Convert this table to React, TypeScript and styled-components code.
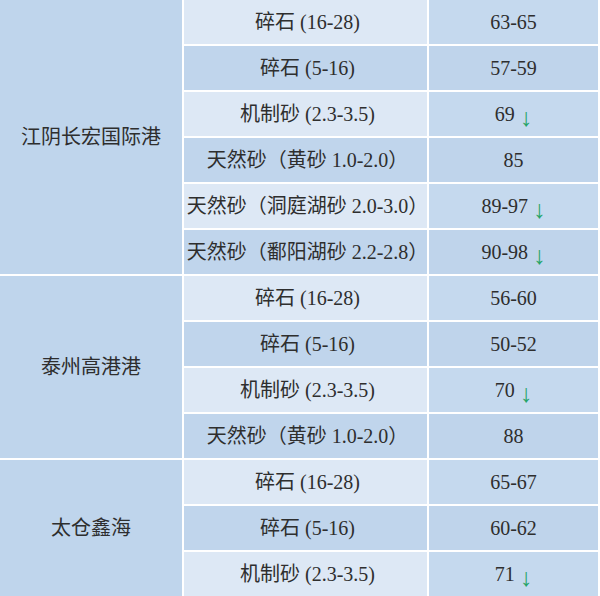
import React from 'react'
import styled, { createGlobalStyle } from 'styled-components'

type Item = { name: string; price: string; down?: boolean }
type Group = { port: string; items: Item[] }

const groups: Group[] = [
  {
    port: '江阴长宏国际港',
    items: [
      { name: '碎石 (16-28)', price: '63-65' },
      { name: '碎石 (5-16)', price: '57-59' },
      { name: '机制砂 (2.3-3.5)', price: '69', down: true },
      { name: '天然砂（黄砂 1.0-2.0）', price: '85' },
      { name: '天然砂（洞庭湖砂 2.0-3.0）', price: '89-97', down: true },
      { name: '天然砂（鄱阳湖砂 2.2-2.8）', price: '90-98', down: true },
    ],
  },
  {
    port: '泰州高港港',
    items: [
      { name: '碎石 (16-28)', price: '56-60' },
      { name: '碎石 (5-16)', price: '50-52' },
      { name: '机制砂 (2.3-3.5)', price: '70', down: true },
      { name: '天然砂（黄砂 1.0-2.0）', price: '88' },
    ],
  },
  {
    port: '太仓鑫海',
    items: [
      { name: '碎石 (16-28)', price: '65-67' },
      { name: '碎石 (5-16)', price: '60-62' },
      { name: '机制砂 (2.3-3.5)', price: '71', down: true },
    ],
  },
]

const GlobalStyle = createGlobalStyle`
  html, body {
    margin: 0;
    padding: 0;
    background: #ffffff;
  }
  body {
    font-family: 'Liberation Serif', 'Noto Sans CJK SC', serif;
    color: #2e2e2e;
  }
`

const Table = styled.div`
  display: grid;
  grid-template-columns: 182px 243px 1fr;
  grid-auto-rows: 44px;
  gap: 2px;
  width: 600px;
  height: 596px;
  padding-right: 2px;
  box-sizing: border-box;
  background: #ffffff;
  overflow: hidden;
`

const Cell = styled.div`
  display: flex;
  align-items: center;
  justify-content: center;
  font-size: 20px;
  line-height: 1;
  white-space: nowrap;
`

const PortCell = styled(Cell)<{ $span: number }>`
  grid-column: 1;
  grid-row: span ${(p) => p.$span};
  background: #bfd5ec;
`

const NameCell = styled(Cell)<{ $light: boolean }>`
  grid-column: 2;
  padding-left: 4px;
  background: ${(p) => (p.$light ? '#dde8f5' : '#c0d5ec')};
`

const PriceCell = styled(Cell)<{ $light: boolean }>`
  grid-column: 3;
  background: ${(p) => (p.$light ? '#c5d9ee' : '#bfd4eb')};
`

const Down = styled.span`
  display: inline-block;
  margin-left: 5px;
  color: #26a466;
  font-family: 'Liberation Serif', 'DejaVu Serif', serif;
  font-size: 25px;
  transform: translateY(3px);
`

export default function App() {
  let index = 0
  return (
    <>
      <GlobalStyle />
      <Table>
        {groups.map((g) =>
          g.items.map((item, i) => {
            const light = index++ % 2 === 0
            return (
              <React.Fragment key={g.port + i}>
                {i === 0 ? (
                  <PortCell $span={g.items.length}>{g.port}</PortCell>
                ) : null}
                <NameCell $light={light}>{item.name}</NameCell>
                <PriceCell $light={light}>
                  {item.price}
                  {item.down ? <Down>↓</Down> : null}
                </PriceCell>
              </React.Fragment>
            )
          })
        )}
      </Table>
    </>
  )
}
